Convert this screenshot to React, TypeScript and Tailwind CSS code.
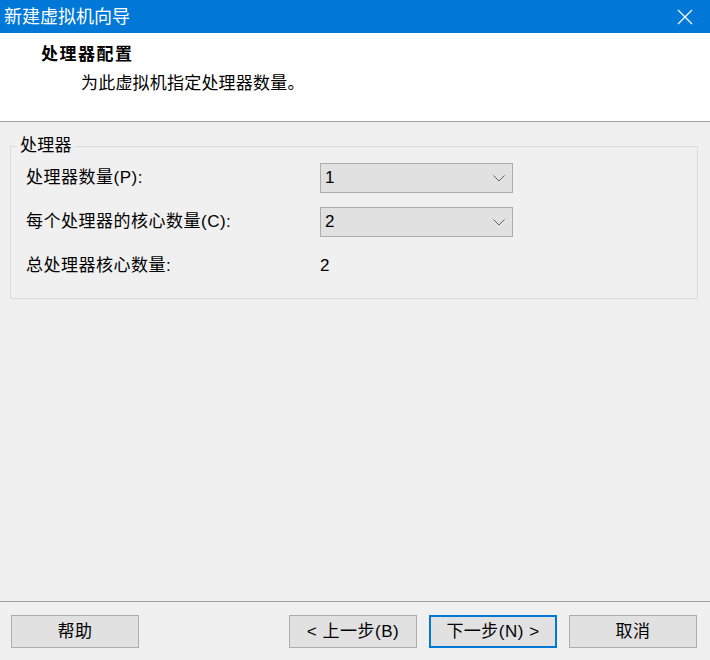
import React from "react";

const font = { fontFamily: '"Liberation Sans", "Noto Sans CJK SC", sans-serif' };

function Chevron() {
  return (
    <svg width="12" height="7" viewBox="0 0 12 7" className="shrink-0">
      <path d="M0.5 0.5 L6 6 L11.5 0.5" fill="none" stroke="#606060" strokeWidth="1" />
    </svg>
  );
}

function Combo({ value }: { value: string }) {
  return (
    <div className="flex h-[30px] w-[193px] items-center justify-between border border-[#adadad] bg-[#e1e1e1] pl-[4px] pr-[7px] text-[17px] leading-[20px] text-black">
      <span>{value}</span>
      <Chevron />
    </div>
  );
}

function Btn({ label, primary }: { label: string; primary?: boolean }) {
  return (
    <div
      className={
        "flex h-[33px] w-[128px] items-center justify-center bg-[#e1e1e1] text-[17px] leading-[20px] tracking-[0.5px] text-black " +
        (primary ? "border-2 border-[#0078d7]" : "border border-[#adadad]")
      }
    >
      {label}
    </div>
  );
}

export default function App() {
  return (
    <div className="flex h-[660px] w-[710px] flex-col bg-[#f0f0f0]" style={font}>
      {/* Title bar */}
      <div className="flex h-[33px] shrink-0 items-center justify-between bg-[#0078d7] pl-[4px] pr-[17px]">
        <span className="text-[18px] leading-[22px] text-white">新建虚拟机向导</span>
        <svg width="16" height="16" viewBox="0 0 16 16">
          <path d="M1 1 L15 15 M15 1 L1 15" stroke="white" strokeWidth="1.3" fill="none" />
        </svg>
      </div>

      {/* Header */}
      <div className="flex h-[89px] shrink-0 flex-col border-b border-[#a0a0a0] bg-white">
        <div className="pl-[41px] pt-[12px] text-[17px] font-bold leading-[20px] tracking-[1.5px] text-black">处理器配置</div>
        <div className="pl-[81px] pt-[9px] text-[17px] leading-[20px] tracking-[0.2px] text-black">为此虚拟机指定处理器数量。</div>
      </div>

      {/* Body */}
      <div className="flex-1 pl-[10px] pr-[12px] pt-[14px]">
        <fieldset className="h-[163px] border border-[#dcdcdc]">
          <legend className="ml-[6px] px-[3px] text-[17px] leading-[20px] tracking-[0.3px] text-black">处理器</legend>
          <div className="flex flex-col gap-[14px] pl-[15px] pt-[7px] text-[17px] leading-[20px] tracking-[0.5px] text-black">
            <div className="flex items-center">
              <span className="w-[294px]">处理器数量(P):</span>
              <Combo value="1" />
            </div>
            <div className="flex items-center">
              <span className="w-[294px]">每个处理器的核心数量(C):</span>
              <Combo value="2" />
            </div>
            <div className="flex h-[30px] items-center">
              <span className="w-[294px]">总处理器核心数量:</span>
              <span>2</span>
            </div>
          </div>
        </fieldset>
      </div>

      {/* Footer */}
      <div className="flex h-[59px] shrink-0 items-start border-t border-[#a0a0a0] pl-[11px] pr-[13px] pt-[13px]">
        <Btn label="帮助" />
        <div className="flex-1" />
        <div className="flex gap-[12px]">
          <Btn label="< 上一步(B)" />
          <Btn label="下一步(N) >" primary />
          <Btn label="取消" />
        </div>
      </div>
    </div>
  );
}
